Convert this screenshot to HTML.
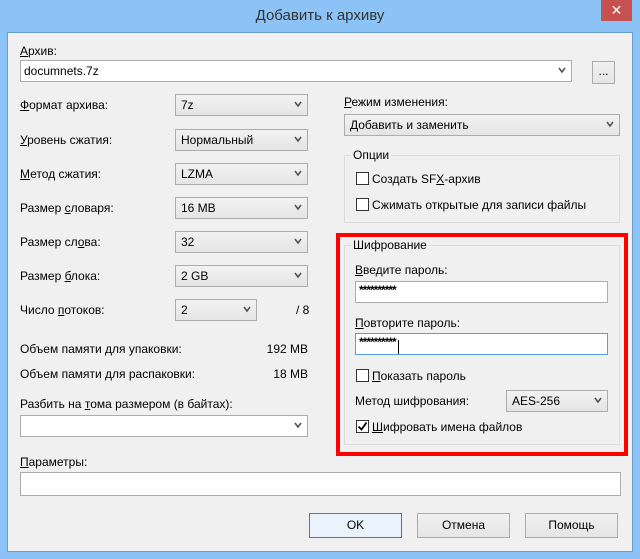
<!DOCTYPE html>
<html><head><meta charset="utf-8"><style>
*{box-sizing:border-box}
body{margin:0;width:640px;height:559px;background:#8cc3f6;font-family:"Liberation Sans","DejaVu Sans",sans-serif;font-size:12px;color:#000;position:relative;overflow:hidden}
.a{position:absolute;white-space:nowrap}
.client{position:absolute;left:7px;top:32px;width:626px;height:520px;background:#f0f0f0;border:1px solid #6a9ccc}
.inp{position:absolute;background:#fff;border:1px solid #acacac}
.sel{position:absolute;background:linear-gradient(#f2f2f2,#e5e5e5);border:1px solid #acacac;padding:3px 0 0 5px}
.arr{position:absolute;right:4px;top:4px;width:10px;height:10px}
.btn{position:absolute;background:linear-gradient(#f0f0f0,#e5e5e5);border:1px solid #acacac;text-align:center;line-height:22px}
.grp{position:absolute;border:1px solid #dcdcdc}
.lg{position:absolute;top:-8px;left:6px;background:#f0f0f0;padding:0 2px}
.cb{position:absolute;width:13px;height:13px;background:#fff;border:1px solid #333}
.pw{font-size:12px;font-weight:bold;line-height:16px;letter-spacing:-1px;padding:0 0 0 3px}
u{text-decoration:underline}
</style></head><body>
<div class="a" style="left:0;width:640px;top:7px;text-align:center;font-size:15px;color:#333">Добавить к архиву</div>
<div class="a" style="left:601px;top:0;width:31px;height:21px;background:#c75050;color:#fff;text-align:center;font-size:14px;line-height:21px;font-weight:bold">✕</div>
<div class="client"></div>

<div class="a" style="left:20px;top:44px"><u>А</u>рхив:</div>
<div class="inp" style="left:20px;top:60px;width:552px;height:22px;padding:3px 0 0 3px">documnets.7z<svg class="arr" viewBox="0 0 10 10"><path d="M2 3l3 4 3-4" fill="none" stroke="#555" stroke-width="1.6"/></svg></div>
<div class="btn" style="left:592px;top:61px;width:23px;height:23px;line-height:18px">...</div>

<div class="a" style="left:20px;top:98px"><u>Ф</u>ормат архива:</div>
<div class="a" style="left:20px;top:133px"><u>У</u>ровень сжатия:</div>
<div class="a" style="left:20px;top:167px"><u>М</u>етод сжатия:</div>
<div class="a" style="left:20px;top:201px">Размер <u>с</u>ловаря:</div>
<div class="a" style="left:20px;top:235px">Размер сл<u>о</u>ва:</div>
<div class="a" style="left:20px;top:269px">Размер <u>б</u>лока:</div>
<div class="a" style="left:20px;top:303px">Число <u>п</u>отоков:</div>
<div class="sel" style="left:175px;top:94px;width:133px;height:22px">7z<svg class="arr" viewBox="0 0 10 10"><path d="M2 3l3 4 3-4" fill="none" stroke="#555" stroke-width="1.6"/></svg></div>
<div class="sel" style="left:175px;top:129px;width:133px;height:22px">Нормальный<svg class="arr" viewBox="0 0 10 10"><path d="M2 3l3 4 3-4" fill="none" stroke="#555" stroke-width="1.6"/></svg></div>
<div class="sel" style="left:175px;top:163px;width:133px;height:22px">LZMA<svg class="arr" viewBox="0 0 10 10"><path d="M2 3l3 4 3-4" fill="none" stroke="#555" stroke-width="1.6"/></svg></div>
<div class="sel" style="left:175px;top:197px;width:133px;height:22px">16 MB<svg class="arr" viewBox="0 0 10 10"><path d="M2 3l3 4 3-4" fill="none" stroke="#555" stroke-width="1.6"/></svg></div>
<div class="sel" style="left:175px;top:231px;width:133px;height:22px">32<svg class="arr" viewBox="0 0 10 10"><path d="M2 3l3 4 3-4" fill="none" stroke="#555" stroke-width="1.6"/></svg></div>
<div class="sel" style="left:175px;top:265px;width:133px;height:22px">2 GB<svg class="arr" viewBox="0 0 10 10"><path d="M2 3l3 4 3-4" fill="none" stroke="#555" stroke-width="1.6"/></svg></div>
<div class="sel" style="left:175px;top:299px;width:82px;height:22px">2<svg class="arr" viewBox="0 0 10 10"><path d="M2 3l3 4 3-4" fill="none" stroke="#555" stroke-width="1.6"/></svg></div>
<div class="a" style="left:296px;top:303px">/ 8</div>
<div class="a" style="left:20px;top:342px">Объем памяти для упаковки:</div>
<div class="a" style="left:20px;top:367px">Объем памяти для распаковки:</div>
<div class="a" style="left:200px;width:108px;text-align:right;top:342px">192 MB</div>
<div class="a" style="left:200px;width:108px;text-align:right;top:367px">18 MB</div>
<div class="a" style="left:20px;top:397px">Разбить на <u>т</u>ома размером (в байтах):</div>
<div class="inp" style="left:20px;top:415px;width:288px;height:22px"><svg class="arr" viewBox="0 0 10 10"><path d="M2 3l3 4 3-4" fill="none" stroke="#555" stroke-width="1.6"/></svg></div>
<div class="a" style="left:20px;top:455px"><u>П</u>араметры:</div>
<div class="inp" style="left:20px;top:472px;width:601px;height:24px"></div>

<div class="a" style="left:344px;top:95px"><u>Р</u>ежим изменения:</div>
<div class="sel" style="left:344px;top:114px;width:276px;height:22px">Добавить и заменить<svg class="arr" viewBox="0 0 10 10"><path d="M2 3l3 4 3-4" fill="none" stroke="#555" stroke-width="1.6"/></svg></div>
<div class="grp" style="left:344px;top:155px;width:276px;height:68px"><div class="lg">Опции</div></div>
<div class="cb" style="left:356px;top:172px"></div><div class="a" style="left:372px;top:172px">Создать SF<u>X</u>-архив</div>
<div class="cb" style="left:356px;top:198px"></div><div class="a" style="left:372px;top:198px">Сжимать открытые для записи файлы</div>

<div class="a" style="left:336px;top:233px;width:292px;height:223px;border:4px solid #f00"></div>
<div class="grp" style="left:344px;top:245px;width:276px;height:200px"><div class="lg">Шифрование</div></div>
<div class="a" style="left:355px;top:263px"><u>В</u>ведите пароль:</div>
<div class="inp pw" style="left:355px;top:281px;width:253px;height:22px">**********</div>
<div class="a" style="left:355px;top:316px"><u>П</u>овторите пароль:</div>
<div class="inp pw" style="left:355px;top:333px;width:253px;height:22px;border-color:#569de5">**********<span style="display:inline-block;width:1px;height:14px;background:#000;vertical-align:-8px;margin-left:2px"></span></div>
<div class="cb" style="left:356px;top:369px"></div><div class="a" style="left:372px;top:369px"><u>П</u>оказать пароль</div>
<div class="a" style="left:355px;top:394px">Метод шифрования:</div>
<div class="sel" style="left:506px;top:390px;width:102px;height:22px">AES-256<svg class="arr" viewBox="0 0 10 10"><path d="M2 3l3 4 3-4" fill="none" stroke="#555" stroke-width="1.6"/></svg></div>
<div class="cb" style="left:356px;top:420px"><svg style="position:absolute;left:0;top:0" width="11" height="11" viewBox="0 0 11 11"><path d="M1.5 5.5l3 3 5-7" fill="none" stroke="#000" stroke-width="1.8"/></svg></div>
<div class="a" style="left:372px;top:420px"><u>Ш</u>ифровать имена файлов</div>

<div class="btn" style="left:309px;top:513px;width:93px;height:25px;border-color:#3c7fb1;background:#eaf3fb">OK</div>
<div class="btn" style="left:417px;top:513px;width:93px;height:25px">Отмена</div>
<div class="btn" style="left:525px;top:513px;width:93px;height:25px">Помощь</div>
</body></html>
